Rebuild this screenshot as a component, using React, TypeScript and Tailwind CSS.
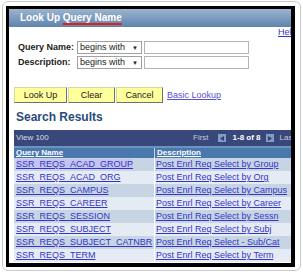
const rows = [
  ["SSR_REQS_ACAD_GROUP", "Post Enrl Req Select by Group"],
  ["SSR_REQS_ACAD_ORG", "Post Enrl Req Select by Org"],
  ["SSR_REQS_CAMPUS", "Post Enrl Req Select by Campus"],
  ["SSR_REQS_CAREER", "Post Enrl Req Select by Career"],
  ["SSR_REQS_SESSION", "Post Enrl Req Select by Sessn"],
  ["SSR_REQS_SUBJECT", "Post Enrl Req Select by Subj"],
  ["SSR_REQS_SUBJECT_CATNBR", "Post Enrl Req Select - Sub/Cat"],
  ["SSR_REQS_TERM", "Post Enrl Req Select by Term"],
];

function Field({ label }: { label: string }) {
  return (
    <div className="flex items-center h-[13px] pl-[9px]">
      <span className="w-[59px] text-[9px] font-bold text-[#222] leading-none">{label}</span>
      <div className="w-[65px] h-[13px] border border-[#a0a0a0] bg-white flex items-center justify-between pl-[2px] pr-[3px]">
        <span className="text-[9px] text-[#222] leading-none">begins with</span>
        <span className="text-[6px] text-[#222] leading-none">▼</span>
      </div>
      <div className="ml-[2px] w-[105px] h-[13px] border border-[#b4b4b4] bg-white" />
    </div>
  );
}

function Btn({ label, w }: { label: string; w: string }) {
  return (
    <div
      className={`${w} h-[16px] bg-[#ffff9c] border border-t-[#d8d8a0] border-l-[#d8d8a0] border-r-[#707070] border-b-[#707070] flex items-center justify-center text-[9px] text-[#222] leading-none`}
    >
      {label}
    </div>
  );
}

function Arrow({ dir }: { dir: "l" | "r" }) {
  return (
    <div className="w-[8px] h-[8px] bg-[#7f9dc4] flex items-center justify-center">
      <svg width="4" height="5" viewBox="0 0 4 5">
        {dir === "l" ? <polygon points="4,0 4,5 0,2.5" fill="#34436e" /> : <polygon points="0,0 0,5 4,2.5" fill="#34436e" />}
      </svg>
    </div>
  );
}

export default function App() {
  return (
    <div className="w-[303px] h-[272px] bg-white overflow-hidden" style={{ fontFamily: '"Liberation Sans", Arial, sans-serif' }}>
      <div className="ml-[2px] mt-[1px] w-[299px] h-[270px] border border-[#c8c8c8] rounded-[6px] pl-[3px] pt-[4px]">
        <div className="w-[289px] h-[261px] border-l-[3px] border-t-[3px] border-r-[4px] border-b-[4px] border-black bg-white overflow-hidden">
          {/* title bar */}
          <div className="h-[18px] bg-gradient-to-b from-[#9bb4d0] to-[#5f84ad] pl-[11px] text-[10px] font-bold text-white leading-[17px] whitespace-nowrap">
            Look Up{" "}
            <span className="underline decoration-[#e0201c] decoration-2 underline-offset-[2px]">Query Name</span>
          </div>

          <div className="h-[11px] pl-[269px] text-[9px] leading-[11px] whitespace-nowrap overflow-hidden">
            <span className="text-[#3535c8] underline">Help</span>
          </div>

          <div className="mt-[3px] flex flex-col gap-[2px]">
            <Field label="Query Name:" />
            <Field label="Description:" />
          </div>

          <div className="mt-[18px] pl-[5px] flex items-center gap-[1px]">
            <Btn label="Look Up" w="w-[53px]" />
            <Btn label="Clear" w="w-[47px]" />
            <Btn label="Cancel" w="w-[47px]" />
            <span className="ml-[3px] text-[9px] leading-none text-[#5a4fcf] underline">Basic Lookup</span>
          </div>

          <div className="mt-[6px] pl-[7px] h-[16px] text-[12px] font-bold text-[#2a4a7a] leading-[16px]">Search Results</div>

          {/* grid */}
          <div className="mt-[5px] ml-[5px] w-[300px]">
            <div className="h-[16px] bg-[#39487a] flex items-center text-[8px] leading-none whitespace-nowrap">
              <span className="pl-[2px] text-[#d6dbe8] w-[179px]">View 100</span>
              <span className="text-[#c4cbdc]">First</span>
              <div className="ml-[9px]"><Arrow dir="l" /></div>
              <span className="ml-[7px] text-white font-bold">1-8 of 8</span>
              <div className="ml-[5px]"><Arrow dir="r" /></div>
              <span className="ml-[6px] text-[#c4cbdc]">Last</span>
            </div>
            <div className="h-[2px] bg-[#6f93c0]" />
            <div className="h-[10px] bg-[#4a78ad] flex text-[8px] font-bold text-white leading-[10px]">
              <div className="w-[141px] pl-[2px] border-r border-[#c9d6e6]"><span className="underline">Query Name</span></div>
              <div className="pl-[2px]"><span className="underline">Description</span></div>
            </div>
            {rows.map(([name, desc], i) => (
              <div
                key={name}
                className={`h-[13px] flex text-[9px] leading-[13px] text-[#3535c8] whitespace-nowrap ${i % 2 === 0 ? "bg-[#c7d4e4]" : "bg-[#e5ebf3]"}`}
              >
                <div className="w-[141px] pl-[2px] border-r border-white">
                  <span className={`underline ${i === 0 ? "bg-[#c4c4ee]" : ""}`}>{name}</span>
                </div>
                <div className="pl-[1px]">
                  <span className="underline">{desc}</span>
                </div>
              </div>
            ))}
          </div>
        </div>
      </div>
    </div>
  );
}
